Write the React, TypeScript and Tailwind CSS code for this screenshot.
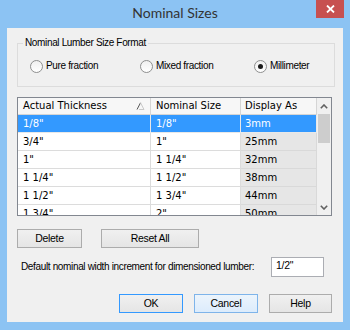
import React from "react";

const ui = { fontFamily: "'Liberation Sans', Arial, sans-serif" };
const tbl = { fontFamily: "'DejaVu Sans', Verdana, sans-serif" };

function Radio({ checked, label, w }: { checked?: boolean; label: string; w: string }) {
  return (
    <div className={`flex items-center gap-[3px] ${w}`}>
      <div className="w-[13px] h-[13px] rounded-full border border-[#8e8f8f] bg-gradient-to-b from-[#f0f0f0] to-[#ffffff] flex items-center justify-center">
        {checked && <div className="w-[5px] h-[5px] rounded-full bg-[#1a1a1a]" />}
      </div>
      <span className="text-[10px] tracking-[-0.35px] leading-[14px] text-black">{label}</span>
    </div>
  );
}

function Btn({ label, w, variant }: { label: string; w: string; variant?: "default" | "hover" }) {
  const cls =
    variant === "default"
      ? "border-[#3399ff] bg-gradient-to-b from-[#f0f0f0] to-[#e5e5e5]"
      : variant === "hover"
      ? "border-[#7eb4ea] bg-gradient-to-b from-[#ecf4fc] to-[#dcecfc]"
      : "border-[#acacac] bg-gradient-to-b from-[#f0f0f0] to-[#e5e5e5]";
  return (
    <div className={`${w} h-[19px] border ${cls} flex items-center justify-center text-[10.5px] tracking-[-0.3px] text-black`}>
      {label}
    </div>
  );
}

const rows = [
  ["1/8\"", "1/8\"", "3mm"],
  ["3/4\"", "1\"", "25mm"],
  ["1\"", "1 1/4\"", "32mm"],
  ["1 1/4\"", "1 1/2\"", "38mm"],
  ["1 1/2\"", "1 3/4\"", "44mm"],
  ["1 3/4\"", "2\"", "50mm"],
];

export default function App() {
  return (
    <div className="w-[350px] h-[330px] bg-[#8cc3f3] flex flex-col overflow-hidden" style={ui}>
      {/* title bar */}
      <div className="h-[28px] flex shrink-0">
        <div className="w-[34px]" />
        <div
          className="flex-1 text-center text-[14px] leading-[26px] text-[#333333]"
          style={{ fontFamily: "Lato, 'Noto Sans', sans-serif" }}
        >
          Nominal Sizes
        </div>
        <div className="w-[34px] flex items-start">
          <div className="w-[28px] h-[18px] bg-[#c75050] flex items-center justify-center">
            <svg width="9" height="8" viewBox="0 0 9 8">
              <path d="M1 0.5 L8 7.5 M8 0.5 L1 7.5" stroke="white" strokeWidth="1.8" />
            </svg>
          </div>
        </div>
      </div>

      {/* client area */}
      <div className="mx-[7px] mb-[8px] flex-1 bg-[#f0f0f0] flex flex-col">
        {/* group box */}
        <fieldset className="mt-[8px] ml-[10px] w-[316px] h-[51px] border border-[#dcdcdc]">
          <legend className="ml-[5px] px-[2px] text-[10px] tracking-[-0.35px] leading-[14px] text-black">
            Nominal Lumber Size Format
          </legend>
          <div className="flex mt-[9px] pl-[12px]">
            <Radio label="Pure fraction" w="w-[110px]" />
            <Radio label="Mixed fraction" w="w-[114px]" />
            <Radio label="Millimeter" checked w="w-[80px]" />
          </div>
        </fieldset>

        {/* table */}
        <div className="mt-[10px] ml-[10px] w-[315px] h-[119px] border border-[#828790] bg-white flex overflow-hidden" style={tbl}>
          <div className="flex flex-col w-[299px]">
            <div className="h-[17px] flex shrink-0 bg-[#f7f7f7] border-b border-[#d5d5d5] text-[10px] leading-[16px] text-black">
              <div className="w-[133px] pl-[5px] pr-[5px] border-r border-[#d5d5d5] flex items-center justify-between">
                <span>Actual Thickness</span>
                <svg width="9" height="8" viewBox="0 0 9 8">
                  <path d="M1 7.5 L4.5 0.8" stroke="#555" strokeWidth="1" fill="none" />
                  <path d="M4.5 0.8 L8 7.5 L3 7.5" stroke="#c8c8c8" strokeWidth="1" fill="none" />
                </svg>
              </div>
              <div className="w-[90px] pl-[5px] border-r border-[#d5d5d5]">Nominal Size</div>
              <div className="w-[76px] pl-[4px] border-r border-[#d5d5d5]">Display As</div>
            </div>
            {rows.map((r, i) => {
              const sel = i === 0;
              return (
                <div key={i} className="h-[18px] flex shrink-0 text-[10px] leading-[17px]">
                  <div className={`w-[133px] pl-[5px] border-r border-b ${sel ? "bg-[#3399ff] text-white border-[#e8e8e8]" : "bg-white text-black border-[#dcdcdc]"}`}>
                    {r[0]}
                  </div>
                  <div className={`w-[90px] pl-[5px] border-r border-b ${sel ? "bg-[#3399ff] text-white border-[#e8e8e8]" : "bg-white text-black border-[#dcdcdc]"}`}>
                    {r[1]}
                  </div>
                  <div className={`w-[76px] pl-[4px] border-b border-r ${sel ? "bg-[#3399ff] text-white border-[#e8e8e8]" : "bg-[#e6e6e6] text-black border-[#d9d9d9]"}`}>
                    {r[2]}
                  </div>
                </div>
              );
            })}
          </div>
          {/* scrollbar */}
          <div className="w-[14px] bg-[#f0f0f0] flex flex-col items-center">
            <div className="h-[16px] flex items-center justify-center">
              <svg width="8" height="5" viewBox="0 0 8 5">
                <path d="M0.8 4.2 L4 1 L7.2 4.2" stroke="#606060" strokeWidth="1.6" fill="none" />
              </svg>
            </div>
            <div className="w-[12px] h-[29px] bg-[#cdcdcd]" />
            <div className="flex-1" />
            <div className="h-[16px] flex items-center justify-center">
              <svg width="8" height="5" viewBox="0 0 8 5">
                <path d="M0.8 0.8 L4 4 L7.2 0.8" stroke="#606060" strokeWidth="1.6" fill="none" />
              </svg>
            </div>
          </div>
        </div>

        {/* delete / reset */}
        <div className="mt-[13px] ml-[10px] flex gap-[19px]">
          <Btn label="Delete" w="w-[65px]" />
          <Btn label="Reset All" w="w-[98px]" />
        </div>

        {/* increment */}
        <div className="mt-[9px] ml-[14px] flex items-center">
          <span className="w-[250px] whitespace-nowrap text-[10px] tracking-[-0.35px] leading-[14px] text-black">
            Default nominal width increment for dimensioned lumber:
          </span>
          <div className="w-[53px] h-[20px] border border-[#abadb3] bg-white text-[10.5px] tracking-[-0.3px] leading-[13px] pl-[4px] pt-[1px] text-black">
            1/2"
          </div>
        </div>

        {/* bottom buttons */}
        <div className="mt-[17px] mr-[11px] flex justify-end gap-[11px]">
          <Btn label="OK" w="w-[64px]" variant="default" />
          <Btn label="Cancel" w="w-[64px]" variant="hover" />
          <Btn label="Help" w="w-[63px]" />
        </div>
      </div>
    </div>
  );
}
